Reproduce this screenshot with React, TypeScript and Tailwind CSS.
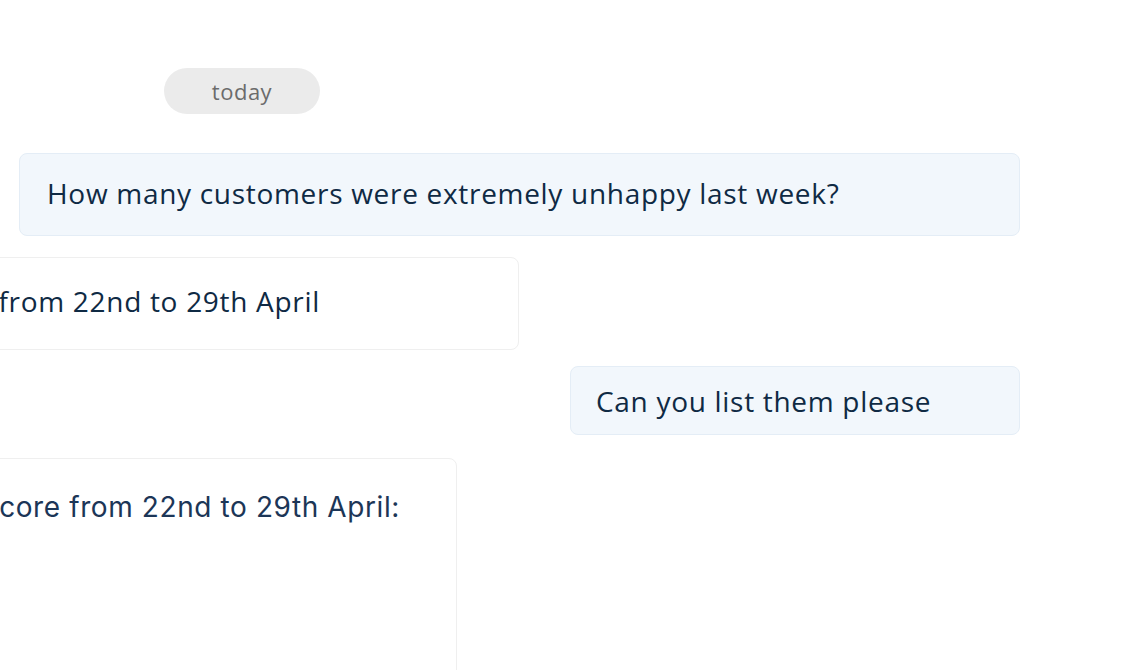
import React from 'react';

const userBubble =
  'bg-[#f2f7fc] border border-[#e4edf6] rounded-lg flex items-center text-[#0f2a44] whitespace-nowrap';
const botBubble =
  'bg-white border border-[#efefef] rounded-lg flex justify-end text-[#0f2a44] whitespace-nowrap overflow-hidden';

export default function App() {
  return (
    <div className="w-[1124px] h-[670px] overflow-hidden bg-white font-['Open_Sans',sans-serif] flex flex-col">
      {/* Day divider */}
      <div className="mt-[68px] ml-[164px] w-[156px] h-[46px] shrink-0 rounded-full bg-[#ebebeb] flex items-center justify-center text-[22px] tracking-[0.5px] text-[#6b6b6b]">
        today
      </div>

      {/* User question */}
      <div className={`${userBubble} mt-[39px] ml-[19px] w-[1001px] h-[83px] shrink-0 pl-[27px] pb-[3px] text-[28px] tracking-[0.7px]`}>
        How many customers were extremely unhappy last week?
      </div>

      {/* Bot answer (clipped by the left edge) */}
      <div className={`${botBubble} mt-[21px] -ml-[800px] w-[1319px] h-[93px] shrink-0 items-center pr-[198px] pb-[5px] text-[28px] tracking-[0.7px]`}>
        There were 12 customers who gave a score of 1 from 22nd to 29th April
      </div>

      {/* User follow-up */}
      <div className={`${userBubble} mt-[16px] ml-[570px] w-[450px] h-[69px] shrink-0 pl-[25px] text-[28px] tracking-[0.7px]`}>
        Can you list them please
      </div>

      {/* Bot list */}
      <div className={`${botBubble} mt-[23px] -ml-[800px] w-[1257px] h-[320px] shrink-0 items-start pr-[56px] pt-[27px] font-['Inter',sans-serif] text-[28px] tracking-[0.6px] text-[#1c3657]`}>
        Here are the customers with the lowest NPS score from 22nd to 29th April:
      </div>
    </div>
  );
}
